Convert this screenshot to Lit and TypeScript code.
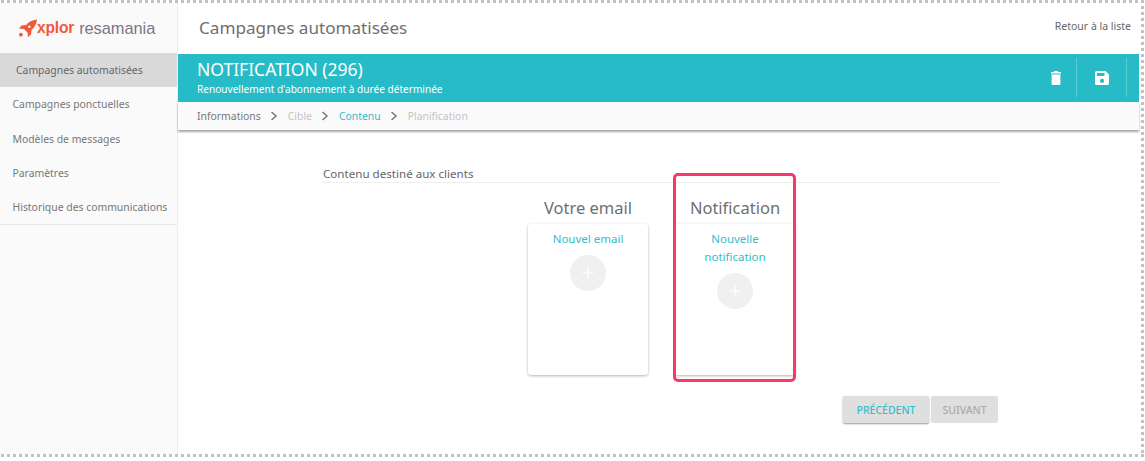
import { LitElement, html, css } from "lit";
import { customElement } from "lit/decorators.js";

const chevron = html`<svg class="chev" width="8" height="10" viewBox="0 0 8 10"><path d="M1.5 1 L6 5 L1.5 9" fill="none" stroke="#777" stroke-width="1.5"/></svg>`;

@customElement("app-root")
export class AppRoot extends LitElement {
  static styles = css`
    :host {
      display: block;
      width: 1145px;
      height: 461px;
      background: #fff;
      font-family: "Noto Sans", "Open Sans", sans-serif;
      color: #666;
      overflow: hidden;
    }
    .frame {
      box-sizing: border-box;
      width: 1144px;
      height: 457px;
      padding: 3px 5px 3px 0;
      display: flex;
      background:
        repeating-linear-gradient(90deg, #c2c2c2 0 3px, transparent 3px 6px) 1px 0 / 100% 3px no-repeat,
        repeating-linear-gradient(90deg, #c2c2c2 0 3px, transparent 3px 6px) 1px 100% / 100% 3px no-repeat,
        repeating-linear-gradient(180deg, #c2c2c2 0 3px, transparent 3px 6px) 100% 0 / 3px 100% no-repeat;
    }
    .side {
      box-sizing: border-box;
      width: 178px;
      flex: none;
      background: #fafafa;
      border-right: 1px solid #eee;
    }
    .logo {
      height: 50px;
      display: flex;
      align-items: center;
      padding-left: 19px;
      font-family: "Liberation Sans", sans-serif;
    }
    .x { color: #f4583c; font-weight: 700; font-size: 15.6px; letter-spacing: -0.2px; }
    .r { color: #7d7585; margin-left: 5px; font-size: 16.4px; letter-spacing: -0.05px; }
    .menu { border-bottom: 1px solid #e6e6e6; }
    .item {
      height: 34.25px;
      display: flex;
      align-items: center;
      padding-left: 12.5px;
      font-size: 10.4px;
      color: #777;
      white-space: nowrap;
    }
    .item.on { background: #d9d9d9; padding-left: 16px; color: #666; }
    .main { flex: 1; min-width: 0; display: flex; flex-direction: column; }
    .top {
      height: 51px;
      box-sizing: border-box;
      display: flex;
      align-items: center;
      justify-content: space-between;
      padding: 0 8px 3px 21px;
    }
    .top h1 { font-size: 17.1px; font-weight: 400; margin: 0; color: #6f6f6f; }
    .back { font-size: 10.5px; color: #666; margin-bottom: 2px; }
    .bar {
      height: 48px;
      background: #26bbc6;
      color: #fff;
      display: flex;
      justify-content: space-between;
      align-items: stretch;
      padding: 0 12px 0 19px;
    }
    .bar h2 { font-size: 17.5px; font-weight: 400; margin: 4px 0 0; line-height: 22px; }
    .bar p { font-size: 10.1px; margin: 2px 0 0; line-height: 14px; }
    .acts { display: flex; padding: 4px 0 5px; }
    .act {
      box-sizing: border-box;
      width: 50px;
      display: flex;
      align-items: center;
      justify-content: center;
      border-right: 1px solid #5bcdd5;
    }
    .trash { margin-left: 8px; }
    .crumbs {
      height: 28px;
      background: #fafafa;
      box-shadow: 0 2px 2px rgba(0, 0, 0, 0.35);
      display: flex;
      align-items: center;
      gap: 9.5px;
      padding-left: 19px;
      font-size: 10.4px;
      color: #c4c4c4;
    }
    .crumbs .done { color: #777; }
    .crumbs .cur { color: #2fbcc7; }
    .body { flex: 1; padding: 36px 0 0 145px; }
    .sec {
      width: 677px;
      border-bottom: 1px solid #eee;
      font-size: 11.6px;
      line-height: 15px;
      padding-bottom: 1px;
      color: #666;
    }
    .cols { display: flex; gap: 27px; width: 677px; margin-top: 14px; justify-content: center; }
    .col { width: 120px; text-align: center; position: relative; }
    .col h3 { font-size: 16.5px; font-weight: 400; margin: 0 -10px 5px; line-height: 22px; color: #6f6f6f; }
    .card {
      box-sizing: border-box;
      height: 151px;
      background: #fff;
      border-radius: 3px;
      box-shadow: 0 1px 3px rgba(0, 0, 0, 0.3);
      padding: 6px 10px;
      display: flex;
      flex-direction: column;
      align-items: center;
    }
    .card a { font-size: 11.5px; line-height: 18px; color: #35bdc8; }
    .plus {
      width: 36px;
      height: 36px;
      border-radius: 50%;
      background: #f0f0f0;
      margin-top: 7px;
      display: flex;
      align-items: center;
      justify-content: center;
    }
    .hl {
      box-sizing: border-box;
      position: absolute;
      left: -2px;
      top: -24px;
      width: 123px;
      height: 209px;
      border: 3px solid #f6386b;
      border-radius: 5px;
      pointer-events: none;
    }
    .foot { display: flex; justify-content: flex-end; gap: 2px; width: 675px; margin-top: 21px; }
    .btn {
      height: 27px;
      border-radius: 2px;
      background: #dfdfdf;
      font-weight: 500;
      font-size: 10.5px;
      display: flex;
      align-items: center;
      justify-content: center;
    }
    .prev { width: 86px; color: #35bdc8; box-shadow: 0 1px 2px rgba(0, 0, 0, 0.4); }
    .next { width: 67px; color: #aaa; }
  `;

  private plus() {
    return html`<div class="plus"><svg width="14" height="14" viewBox="0 0 14 14"><path d="M7 1.5v11M1.5 7h11" stroke="#fff" stroke-width="1.2"/></svg></div>`;
  }

  render() {
    return html`<div class="frame">
      <aside class="side">
        <div class="logo">
          <svg width="18" height="18" viewBox="0 0 18 18">
            <path fill-rule="evenodd" fill="#f4583c" d="M18 0.5C13 1 9.5 3 7 6L2.5 6.5L0 9.5L5 10L8.5 13.5L9 18L12 15.5L12.5 11C15.5 8.5 17.5 5 18 0.5ZM10.3 6.4A1.3 1.3 0 1 0 10.3 9A1.3 1.3 0 1 0 10.3 6.4Z"/>
            <circle cx="1.9" cy="15.7" r="1.9" fill="#f4583c"/>
          </svg>
          <span class="x">xplor</span><span class="r">resamania</span>
        </div>
        <nav class="menu">
          <div class="item on">Campagnes automatisées</div>
          <div class="item">Campagnes ponctuelles</div>
          <div class="item">Modèles de messages</div>
          <div class="item">Paramètres</div>
          <div class="item">Historique des communications</div>
        </nav>
      </aside>
      <main class="main">
        <div class="top">
          <h1>Campagnes automatisées</h1>
          <span class="back">Retour à la liste</span>
        </div>
        <div class="bar">
          <div>
            <h2>NOTIFICATION (296)</h2>
            <p>Renouvellement d'abonnement à durée déterminée</p>
          </div>
          <div class="acts">
            <div class="act">
              <svg class="trash" width="10" height="14" viewBox="0 0 10 14" fill="#fff"><path d="M3.2 0h3.6l.5 1H10v1.6H0V1h2.7zM.6 3.6h8.8v9.2a1.2 1.2 0 0 1-1.2 1.2H1.8A1.2 1.2 0 0 1 .6 12.8z"/></svg>
            </div>
            <div class="act">
              <svg width="14" height="14" viewBox="0 0 14 14"><path fill-rule="evenodd" fill="#fff" d="M1.5 0H10.5L14 3.5V12.5A1.5 1.5 0 0 1 12.5 14H1.5A1.5 1.5 0 0 1 0 12.5V1.5A1.5 1.5 0 0 1 1.5 0ZM2 2V5H9.5V2ZM7 7.8A2.1 2.1 0 1 0 7 12A2.1 2.1 0 1 0 7 7.8Z"/></svg>
            </div>
          </div>
        </div>
        <div class="crumbs">
          <span class="done">Informations</span>${chevron}<span>Cible</span>${chevron}<span class="cur">Contenu</span>${chevron}<span>Planification</span>
        </div>
        <div class="body">
          <div class="sec">Contenu destiné aux clients</div>
          <div class="cols">
            <div class="col">
              <h3>Votre email</h3>
              <div class="card"><a>Nouvel email</a>${this.plus()}</div>
            </div>
            <div class="col">
              <h3>Notification</h3>
              <div class="card"><a>Nouvelle notification</a>${this.plus()}</div>
              <div class="hl"></div>
            </div>
          </div>
          <div class="foot">
            <div class="btn prev">PRÉCÉDENT</div>
            <div class="btn next">SUIVANT</div>
          </div>
        </div>
      </main>
    </div>`;
  }
}
